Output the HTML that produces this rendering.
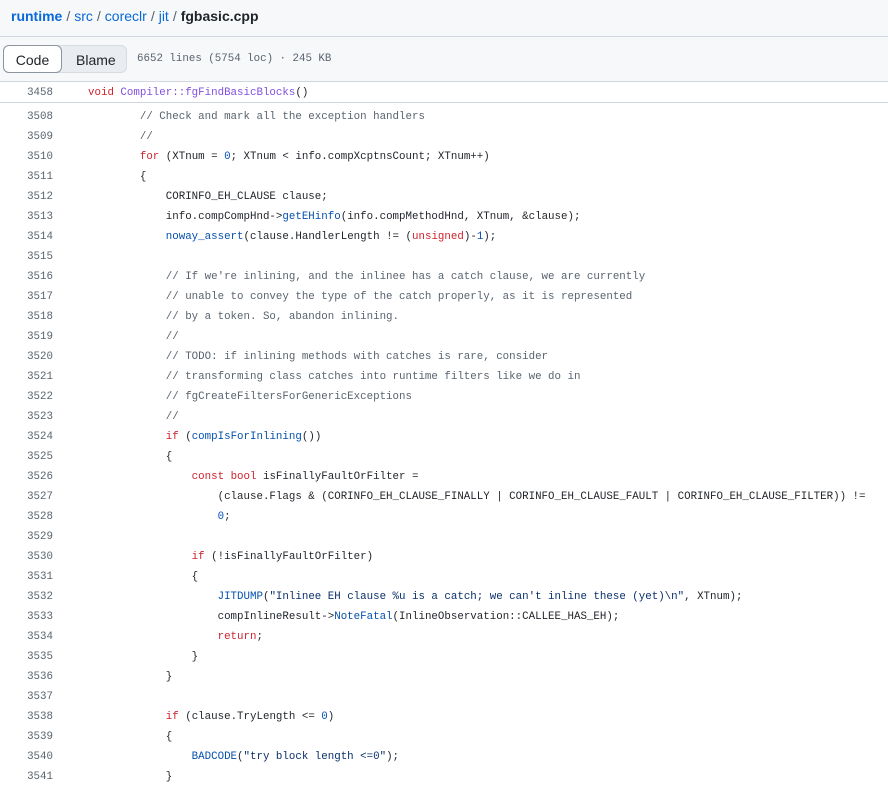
<!DOCTYPE html>
<html><head><meta charset="utf-8"><style>
body{margin:0;width:888px;height:778px;overflow:hidden;background:#fff;font-family:"Liberation Sans",sans-serif;color:#1f2328}
.bc{background:#f6f8fa;border-bottom:1px solid #d0d7de;font-size:14px;line-height:32px;padding-left:11px;box-sizing:border-box;height:37px}
.bc a{color:#0969da;text-decoration:none}.bc .r{font-weight:600}.bc .s{color:#59636e;margin:0 4px}.bc b{font-weight:600}
.tb{height:45px;background:#f6f8fa;border-bottom:1px solid #d0d7de;box-sizing:border-box;position:relative}
.seg{position:absolute;left:3px;top:8px;width:124px;height:28px;background:#e9edf1;border-radius:6px;border:1px solid #d7dce1;box-sizing:border-box}
.code-b{position:absolute;left:-1px;top:-1px;width:59px;height:28px;background:#fff;border:1px solid #8c959f;border-radius:6px;font-size:14px;line-height:28px;text-align:center;box-sizing:border-box}
.blame{position:absolute;left:72px;top:0;font-size:14px;line-height:28px}
.info{position:absolute;left:137px;top:16px;font:10.8px "Liberation Mono",monospace;color:#59636e;white-space:pre}
.mono{font:10.8px/20px "Liberation Mono",monospace}
.st{height:21px;border-bottom:1px solid #d0d7de;box-sizing:border-box;position:relative}
.ln{position:absolute;top:1px;left:0;width:53px;text-align:right;color:#59636e;white-space:pre}
.tx{position:absolute;top:1px;left:88px;white-space:pre}
.lines{position:absolute;top:106px;left:0;width:888px}
.row{height:20px;position:relative}
.k{color:#cf222e}.f{color:#8250df}.b{color:#0550ae}.c{color:#59636e}.s2{color:#0a3069}
</style></head><body>
<div class="bc"><a class="r">runtime</a><span class="s">/</span><a>src</a><span class="s">/</span><a>coreclr</a><span class="s">/</span><a>jit</a><span class="s">/</span><b>fgbasic.cpp</b></div>
<div class="tb"><div class="seg"><div class="code-b">Code</div><div class="blame">Blame</div></div><div class="info">6652 lines (5754 loc) · 245 KB</div></div>
<div class="st mono"><span class="ln">3458</span><span class="tx"><span class="k">void</span> <span class="f">Compiler::fgFindBasicBlocks</span>()</span></div>
<div class="lines mono">
<div class="row"><span class="ln">3508</span><span class="tx">        <span class="c">// Check and mark all the exception handlers</span></span></div>
<div class="row"><span class="ln">3509</span><span class="tx">        <span class="c">//</span></span></div>
<div class="row"><span class="ln">3510</span><span class="tx">        <span class="k">for</span> (XTnum = <span class="b">0</span>; XTnum &lt; info.compXcptnsCount; XTnum++)</span></div>
<div class="row"><span class="ln">3511</span><span class="tx">        {</span></div>
<div class="row"><span class="ln">3512</span><span class="tx">            CORINFO_EH_CLAUSE clause;</span></div>
<div class="row"><span class="ln">3513</span><span class="tx">            info.compCompHnd-&gt;<span class="b">getEHinfo</span>(info.compMethodHnd, XTnum, &amp;clause);</span></div>
<div class="row"><span class="ln">3514</span><span class="tx">            <span class="b">noway_assert</span>(clause.HandlerLength != (<span class="k">unsigned</span>)-<span class="b">1</span>);</span></div>
<div class="row"><span class="ln">3515</span><span class="tx"></span></div>
<div class="row"><span class="ln">3516</span><span class="tx">            <span class="c">// If we're inlining, and the inlinee has a catch clause, we are currently</span></span></div>
<div class="row"><span class="ln">3517</span><span class="tx">            <span class="c">// unable to convey the type of the catch properly, as it is represented</span></span></div>
<div class="row"><span class="ln">3518</span><span class="tx">            <span class="c">// by a token. So, abandon inlining.</span></span></div>
<div class="row"><span class="ln">3519</span><span class="tx">            <span class="c">//</span></span></div>
<div class="row"><span class="ln">3520</span><span class="tx">            <span class="c">// TODO: if inlining methods with catches is rare, consider</span></span></div>
<div class="row"><span class="ln">3521</span><span class="tx">            <span class="c">// transforming class catches into runtime filters like we do in</span></span></div>
<div class="row"><span class="ln">3522</span><span class="tx">            <span class="c">// fgCreateFiltersForGenericExceptions</span></span></div>
<div class="row"><span class="ln">3523</span><span class="tx">            <span class="c">//</span></span></div>
<div class="row"><span class="ln">3524</span><span class="tx">            <span class="k">if</span> (<span class="b">compIsForInlining</span>())</span></div>
<div class="row"><span class="ln">3525</span><span class="tx">            {</span></div>
<div class="row"><span class="ln">3526</span><span class="tx">                <span class="k">const</span> <span class="k">bool</span> isFinallyFaultOrFilter =</span></div>
<div class="row"><span class="ln">3527</span><span class="tx">                    (clause.Flags &amp; (CORINFO_EH_CLAUSE_FINALLY | CORINFO_EH_CLAUSE_FAULT | CORINFO_EH_CLAUSE_FILTER)) !=</span></div>
<div class="row"><span class="ln">3528</span><span class="tx">                    <span class="b">0</span>;</span></div>
<div class="row"><span class="ln">3529</span><span class="tx"></span></div>
<div class="row"><span class="ln">3530</span><span class="tx">                <span class="k">if</span> (!isFinallyFaultOrFilter)</span></div>
<div class="row"><span class="ln">3531</span><span class="tx">                {</span></div>
<div class="row"><span class="ln">3532</span><span class="tx">                    <span class="b">JITDUMP</span>(<span class="s2">"Inlinee EH clause %u is a catch; we can't inline these (yet)\n"</span>, XTnum);</span></div>
<div class="row"><span class="ln">3533</span><span class="tx">                    compInlineResult-&gt;<span class="b">NoteFatal</span>(InlineObservation::CALLEE_HAS_EH);</span></div>
<div class="row"><span class="ln">3534</span><span class="tx">                    <span class="k">return</span>;</span></div>
<div class="row"><span class="ln">3535</span><span class="tx">                }</span></div>
<div class="row"><span class="ln">3536</span><span class="tx">            }</span></div>
<div class="row"><span class="ln">3537</span><span class="tx"></span></div>
<div class="row"><span class="ln">3538</span><span class="tx">            <span class="k">if</span> (clause.TryLength &lt;= <span class="b">0</span>)</span></div>
<div class="row"><span class="ln">3539</span><span class="tx">            {</span></div>
<div class="row"><span class="ln">3540</span><span class="tx">                <span class="b">BADCODE</span>(<span class="s2">"try block length &lt;=0"</span>);</span></div>
<div class="row"><span class="ln">3541</span><span class="tx">            }</span></div>
</div>
</body></html>
